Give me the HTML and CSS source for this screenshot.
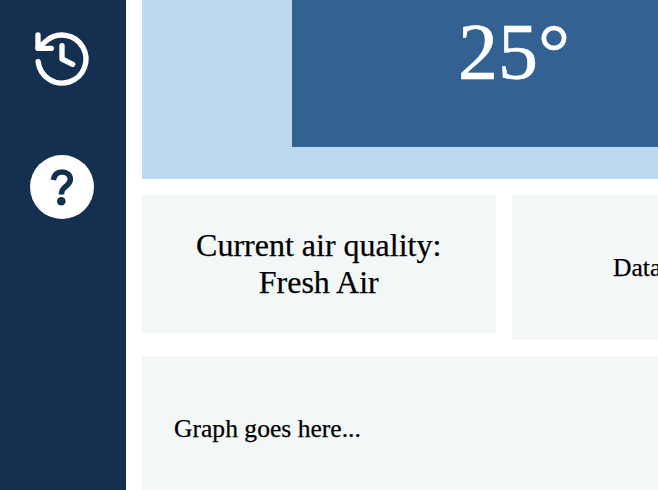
FILE: index.html
```html
<!DOCTYPE html>
<html lang="en">
<head>
<meta charset="utf-8">
<title>Air quality</title>
<link rel="stylesheet" href="styles.css">
</head>
<body>
<div class="app">
  <nav class="sidebar">
    <svg class="icon" viewBox="0 0 24 24" fill="none" stroke="currentColor" stroke-width="2" stroke-linecap="round" stroke-linejoin="round"><path d="M3 3v5h5"/><path d="M3.05 13A9 9 0 1 0 6 5.3L3 8"/><path d="M12 7v5l4 2"/></svg>
    <svg class="icon" viewBox="0 0 64 64"><circle cx="32" cy="32" r="32" fill="currentColor"/><path class="mark" d="M23.300 25C24.300 19.500 27.500 17 32 17c5 0 8.300 3 8.300 7.300 0 3.300-1.800 5-4.600 7.200-2.800 2.200-4.100 3.500-4.300 8"/><circle class="dot" cx="31.300" cy="46.200" r="4.300"/></svg>
  </nav>
  <main class="content">
    <section class="hero"><div class="temperature">25°</div></section>
    <section class="cards">
      <div class="card quality">Current air quality:<br>Fresh Air</div>
      <div class="card data">Data</div>
    </section>
    <section class="graph">Graph goes here...</section>
  </main>
</div>
</body>
</html>
```
FILE: styles.css
```css
* { box-sizing: border-box; }
body {
  margin: 0;
  height: 490px;
  overflow: hidden;
  background: #fff;
  color: #000;
  font: 25.6px/1.15 "Liberation Serif", serif;
  -webkit-text-stroke: 0.25px currentColor;
}
.app { display: flex; height: 490px; }
.sidebar {
  flex: 0 0 126px;
  display: flex;
  flex-direction: column;
  align-items: center;
  gap: 64px;
  padding: 26.5px 2px 0 0;
  background: #152f4f;
  color: #fff;
}
.icon { width: 64px; height: 64px; flex: none; }
.mark { fill: none; stroke: #152f4f; stroke-width: 5.6; }
.dot { fill: #152f4f; }
.content {
  flex: 1;
  min-width: 0;
  display: flex;
  flex-direction: column;
  padding-left: 16px;
}
.hero {
  flex: 0 0 179px;
  padding: 0 0 32px 150px;
  background: #bdd8ef;
}
.temperature {
  height: 147px;
  padding: 6px 0 0 166px;
  background: #336292;
  color: #fff;
  font-size: 80px;
  -webkit-text-stroke-width: 0.6px;
}
.cards {
  display: flex;
  align-items: flex-start;
  gap: 16.5px;
  padding: 16px 0;
}
.card { background: #f3f7f8; }
.quality {
  flex: 0 0 353.5px;
  height: 138px;
  padding-top: 32px;
  text-align: center;
  font-size: 32px;
  line-height: 37px;
}
.data { flex: 1; height: 145px; padding: 58px 0 0 101px; }
.graph { flex: 1; padding: 58px 32px 0; background: #f3f7f8; }
```
